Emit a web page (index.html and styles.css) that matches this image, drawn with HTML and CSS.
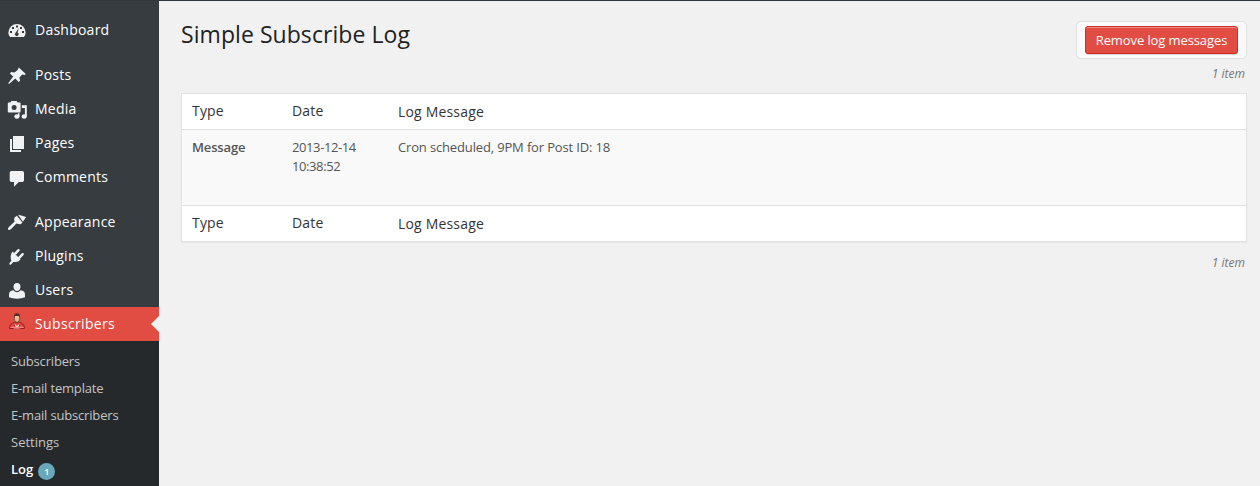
FILE: index.html
```
<!DOCTYPE html>
<html lang="en">
<head>
<meta charset="utf-8">
<title>Simple Subscribe Log</title>
<link rel="stylesheet" href="styles.css">
</head>
<body>
<div class="topbar"></div>
<div class="layout">
<nav class="sidebar">
  <ul class="menu">
    <li class="item"><svg class="icon" viewBox="0 0 20 20"><path fill-rule="evenodd" d="M3.1 17C2 15.700 1.400 14.200 1.400 12.500a8.600 8.500 0 0 1 17.200 0c0 1.700-.6 3.200-1.700 4.500zM9 5.500v2h2v-2zM5 7v2h2V7zm8 0v2h2V7zM3 11v2h2v-2zm12 0v2h2v-2zM11.800 8l-1.200 4.500a1.900 1.900 0 1 1-2 .2z"/></svg><span>Dashboard</span></li>
    <li class="gap"></li>
    <li class="item"><svg class="icon" viewBox="0 0 20 20"><path d="M11.800 2.500l7 6.500-1.300 1-2.300-.5-2.800 3 .7 3.200-1.500 1.200-3.300-3.300L2 19.100l-.8-.8 5-6.700-3.300-3.100L4.200 7l3.300.6 3.100-2.700z"/></svg><span>Posts</span></li>
    <li class="item"><svg class="icon" viewBox="0 0 20 20"><path fill-rule="evenodd" d="M1.700 3.600H3.300L4.500 2h5l1.200 1.600h2q.9 0 .9.900v8q0 1-1 1H1.800q-1 0-1-1v-8q0-.9.900-.9zM7.100 5.900a2.500 2.500 0 1 0 0 5 2.500 2.500 0 0 0 0-5z"/><path d="M14.800 6.200h5v11.200h-1.900V9h-3.100zM11 14.200h1.500v3.200H11z"/><ellipse cx="9.900" cy="17.500" rx="2.600" ry="2.200"/><ellipse cx="17.200" cy="17.500" rx="2.600" ry="2.200"/></svg><span>Media</span></li>
    <li class="item"><svg class="icon" viewBox="0 0 20 20"><path d="M6 3h11v13H6zM3 6h2v11h9v2H3z"/></svg><span>Pages</span></li>
    <li class="item"><svg class="icon" viewBox="0 0 20 20"><path d="M4.500 4h10.700Q17 4 17 5.800v7.400q0 1.800-1.800 1.800h-3.400L7 19.700V15H4.500q-1.800 0-1.800-1.800V5.800Q2.700 4 4.500 4z"/></svg><span>Comments</span></li>
    <li class="gap"></li>
    <li class="item"><svg class="icon" viewBox="0 0 20 20"><path d="M11.100 2.800l2.300.4 5.700 1.900-3.200 4.600zM9.900 3.800l5.500 6.700-1.600 1.800-2.500-.2-1.900-.6-5.500 5.800q-1.700 1.300-2.700.4-.8-1.100.7-2.600l5.800-5.700-.6-1.700.4-2.200z"/></svg><span>Appearance</span></li>
    <li class="item"><svg class="icon" viewBox="0 0 20 20"><path d="M5.500 5.400l8.100 8.200q-2 2.500-5.200 2.500l-2-.1-2.700 2.800-1.400-.2.200-1.600 1.900-2.200q-1.900-5.100 1.100-9.400zM7.100 6.900l3.600-3.600q1-.7 1.700 0t0 1.700L9 8.800zM11.200 10.900l3.600-3.600q1-.7 1.700 0t0 1.700L13 12.800z"/></svg><span>Plugins</span></li>
    <li class="item"><svg class="icon" viewBox="0 0 20 20"><path d="M10 3c2.200 0 3.500 1.500 3.500 3.700S12 11 10 11 6.500 8.900 6.500 6.700 7.800 3 10 3zM6.400 10.300Q8 12.200 10 12.200t3.600-1.900C16.500 10.600 18 12 18 14.500v2.800Q14.600 18.700 10 18.700t-8-1.400v-2.800c0-2.500 1.500-3.900 4.400-4.200z"/></svg><span>Users</span></li>
    <li class="item current"><svg class="icon person" viewBox="0 0 20 20"><path d="M2.600 15.500q0-5.500 4.800-5.800h5.200q4.800.3 4.800 5.800z" fill="#e6423f" stroke="#981c20"/><path d="M7 10l3 3 3-3 .3 5.500H6.700z" fill="#f4dccc"/><path d="M7.200 10l2 5.300H6zM12.800 10l-2 5.300H14z" fill="#c32629"/><path d="M3.300 14q3-1 6-.1l1.400 0q3-.9 6 .1v1H3.300z" fill="#fb8781"/><ellipse cx="10" cy="5.300" rx="2.700" ry="4" fill="#ebbb98" stroke="#683f2d" stroke-width=".8"/><path d="M7 5q-.6-4.800 3-4.800T13 5l-.8-2H7.800z" fill="#4a3128"/></svg><span>Subscribers</span></li>
  </ul>
  <ul class="submenu">
    <li>Subscribers</li><li>E-mail template</li><li>E-mail subscribers</li><li class="settings">Settings</li>
    <li class="active">Log <span class="badge">1</span></li>
  </ul>
</nav>
<main class="content">
  <header class="heading">
    <h1>Simple Subscribe Log</h1>
    <div class="actions"><button class="remove">Remove log messages</button></div>
  </header>
  <div class="count">1 item</div>
  <div class="table">
    <div class="row head"><span>Type</span><span>Date</span><span class="msg">Log Message</span></div>
    <div class="row entry"><strong>Message</strong><span class="date">2013-12-14<br>10:38:52</span><span>Cron scheduled, 9PM for Post ID: 18</span></div>
    <div class="row head foot"><span>Type</span><span>Date</span><span class="msg">Log Message</span></div>
  </div>
  <div class="count bottom">1 item</div>
</main>
</div>
</body>
</html>
```
FILE: styles.css
```
* { box-sizing: border-box; }
body { margin: 0; height: 486px; overflow: hidden; background: #f1f1f1; font: 13px/19px "Open Sans", sans-serif; color: #555; }
ul { list-style: none; margin: 0; padding: 0; }
.topbar { height: 1px; background: #32373c; }
.layout { display: flex; height: 485px; }
.sidebar { width: 159px; flex: none; background: #373c40; display: flex; flex-direction: column; }
.menu { padding-top: 12px; }
.item { display: flex; align-items: flex-start; height: 34px; padding: 7px 0 0 7px; color: #fff; font-size: 14px; line-height: 20px; letter-spacing: .24px; }
.item span { margin-left: 8px; }
.icon { width: 20px; height: 20px; flex: none; fill: #f1f2f3; }
.person { margin-top: -1px; }
.gap { height: 11px; }
.current { position: relative; background: #e14d43; letter-spacing: .35px; }
.current::after { content: ""; position: absolute; right: 0; top: 9px; border: 8px solid transparent; border-left-width: 0; border-right-color: #f1f1f1; }
.submenu { flex: 1; padding: 7px 0 0 11px; background: #26292c; color: #c3c4c5; letter-spacing: -.17px; }
.submenu li { height: 27px; line-height: 27px; white-space: nowrap; }
.submenu .settings { letter-spacing: 0; }
.submenu .active { display: flex; color: #fff; font-weight: 600; letter-spacing: 0; }
.badge { width: 17px; height: 17px; margin: 7px 0 0 5px; border-radius: 50%; background: #69a8bb; font-size: 9px; line-height: 17px; text-align: center; }
.content { flex: 1; padding: 20px 13px 0 22px; }
.heading { display: flex; justify-content: space-between; height: 38px; }
h1 { margin: -1px 0 0; color: #222; font-size: 23px; font-weight: 400; line-height: 29px; letter-spacing: .06px; }
.actions { width: 171px; height: 38px; padding: 4px 8px; border: 1px solid #e1e1e1; border-radius: 5px; background: #fafafa; }
.remove { display: block; width: 153px; height: 28px; padding: 0; border: 1px solid #d02c21; border-radius: 3px; background: #e14d43; box-shadow: inset 0 1px 0 #ec8a85, 0 1px 0 rgba(0,0,0,.15); color: #fff; font: 13px/26px "Open Sans", sans-serif; letter-spacing: -.1px; }
.count { height: 34px; padding: 6px 2px 0 0; text-align: right; color: #777; font-size: 12px; line-height: 18px; font-style: italic; }
.table { border: 1px solid #e2e2e2; background: #fff; box-shadow: 0 1px 1px rgba(0,0,0,.04); }
.row { display: grid; grid-template-columns: 100px 106px 1fr; padding: 0 10px; }
.head { height: 36px; padding-top: 7px; border-bottom: 1px solid #e1e1e1; color: #333; font-size: 14px; line-height: 20px; letter-spacing: .18px; }
.msg { padding-top: 1px; }
.entry { height: 76px; padding-top: 8px; border-bottom: 1px solid #e1e1e1; background: #f9f9f9; letter-spacing: -.15px; }
.entry strong { font-weight: 600; }
.date { letter-spacing: -.4px; }
.foot { height: 35px; border-bottom: 0; }
.bottom { padding-top: 12px; }
```
